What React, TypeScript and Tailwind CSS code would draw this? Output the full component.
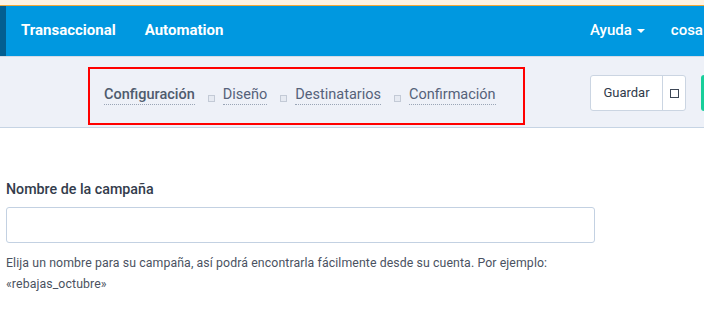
import React from "react";

const Sq = () => (
  <span className="inline-block w-[7px] h-[7px] border border-[#c3cad6] bg-[#e6eaf2] ml-[13px] mr-[8px] mt-[6px]" />
);

const Step = ({ label, strong }: { label: string; strong?: boolean }) => (
  <span
    className={`text-[14.5px] leading-[19px] border-b border-dotted border-[#9aa5b6] ${
      strong ? "font-medium text-[#4f5b6d]" : "text-[#55627a]"
    }`}
  >
    {label}
  </span>
);

export default function App() {
  return (
    <div className="w-[704px] h-[324px] overflow-hidden bg-white" style={{ fontFamily: "Roboto, 'Liberation Sans', sans-serif" }}>
      <div className="h-[5px] bg-[#fef3e4]" />
      <div className="h-[1px] bg-[#f0a83a]" />
      <div className="h-[50px] bg-[#0098e0] flex items-center text-white relative">
        <div className="w-[6px] h-full bg-[#035e90]" />
        <div className="flex items-center pl-[15px] pb-[2px] text-[15px] font-bold gap-[29px]">
          <span>Transaccional</span>
          <span>Automation</span>
        </div>
        <div className="ml-auto flex items-center pb-[2px] text-[15px] font-medium whitespace-nowrap w-[114px] shrink-0">
          <span>Ayuda</span>
          <svg width="10" height="6" viewBox="0 0 10 6" className="ml-[4px] mt-[1px]">
            <path d="M1 1 L5 5 L9 1 Z" fill="white" />
          </svg>
          <span className="ml-[25px]">cosa</span>
        </div>
      </div>
      <div className="h-[1px] bg-[#d4dbe6]" />
      <div className="h-[71px] bg-[#eef1f8] border-b border-[#c6d4e4] flex items-start overflow-hidden">
        <div className="shrink-0 ml-[88px] mt-[10px] w-[437px] h-[58px] border-2 border-[#ff0000] flex items-center pl-[14px] pb-[2px]">
          <Step label="Configuración" strong />
          <Sq />
          <Step label="Diseño" />
          <Sq />
          <Step label="Destinatarios" />
          <Sq />
          <Step label="Confirmación" />
        </div>
        <div className="shrink-0 ml-[65px] mt-[18px] flex h-[36px] bg-white border border-[#cbd5e2] rounded-[3px] text-[#2f3a4a] text-[13px]">
          <div className="w-[72px] flex items-center justify-center border-r border-[#cbd5e2]">Guardar</div>
          <div className="w-[22px] flex items-center justify-center">
            <span className="inline-block w-[9px] h-[9px] border-[1.5px] border-[#3d4756]" />
          </div>
        </div>
        <div className="shrink-0 ml-[15px] mt-[18px] h-[36px] w-[10px] bg-[#17cf9a] rounded-l-[3px]" />
      </div>
      <div className="pl-[6px] pt-[52px]">
        <div className="text-[14.25px] font-medium text-[#333c4c] leading-[18px]">Nombre de la campaña</div>
        <div className="mt-[9px] w-[589px] h-[36px] border border-[#c3d1e2] rounded-[3px]" />
        <div className="mt-[10px] text-[12.3px] tracking-[0.1px] leading-[21px] text-[#4a5261] whitespace-nowrap">
          Elija un nombre para su campaña, así podrá encontrarla fácilmente desde su cuenta. Por ejemplo:
          <br />
          «rebajas_octubre»
        </div>
      </div>
    </div>
  );
}
